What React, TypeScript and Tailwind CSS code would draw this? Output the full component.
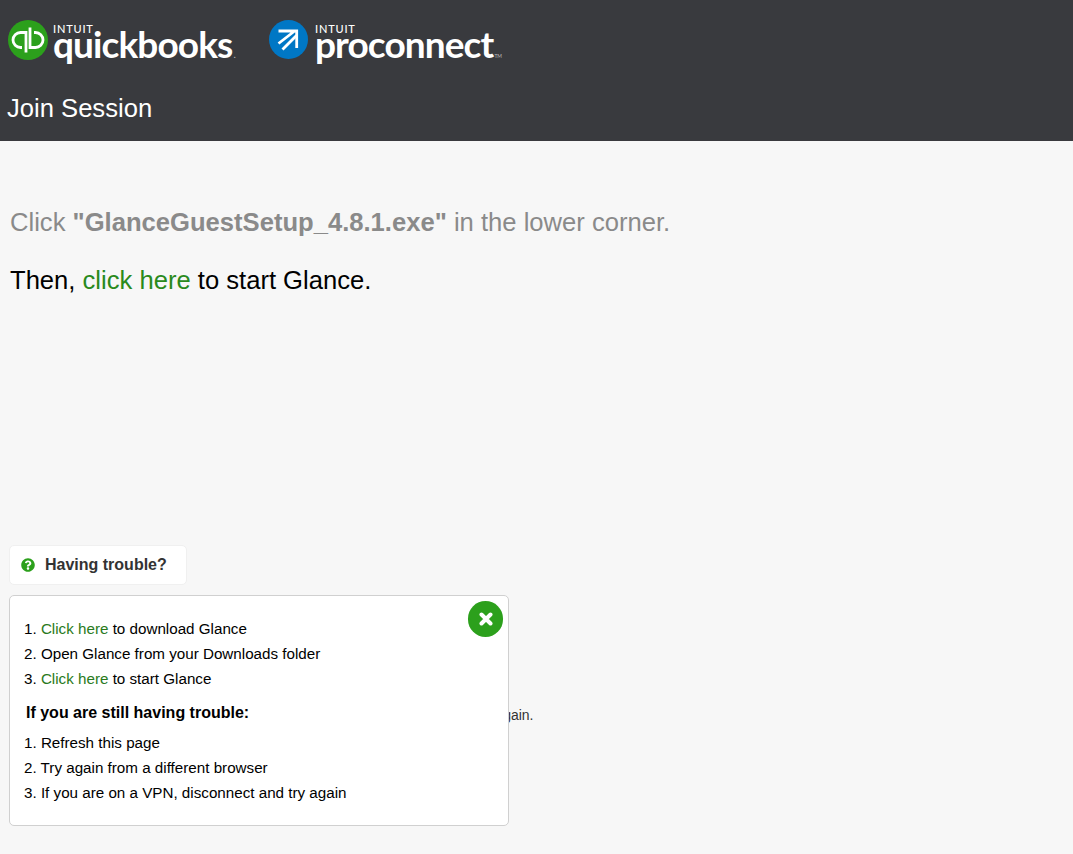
import React from 'react'
import { FaQuestionCircle } from 'react-icons/fa'

const arial = { fontFamily: '"Liberation Sans", Arial, sans-serif' }

const QbMark = () => (
    <svg width="40" height="40" viewBox="0 0 40 40">
        <circle cx="20" cy="20" r="20" fill="#2ca01c" />
        <path d="M14 27.5h-1.5a7.5 7.5 0 0 1 0-15h5.5v20" fill="none" stroke="#fff" strokeWidth="2.8" />
        <path d="M26 12.5h1.5a7.5 7.5 0 0 1 0 15h-5.5v-20" fill="none" stroke="#fff" strokeWidth="2.8" />
    </svg>
)

const ProconnectMark = () => (
    <svg width="39" height="39" viewBox="0 0 39 39">
        <circle cx="19.5" cy="19.5" r="19.5" fill="#0077c5" />
        <path d="M9.5 11h18.2v17M9.5 23.5L25 11.5" fill="none" stroke="#fff" strokeWidth="2.8" />
        <path d="M13.5 29.5L27.5 15.5" fill="none" stroke="#fff" strokeWidth="2.8" />
    </svg>
)

const Wordmark = ({ name, tm, tmClass }: { name: string; tm: string; tmClass: string }) => (
    <div className="flex flex-col text-white font-['Lato',sans-serif]">
        <span className="h-[10px] text-[11px] font-medium leading-[10px] tracking-[0.8px]">INTUIT</span>
        <span className="-mt-[6px] text-[37px] font-bold leading-[32px] tracking-[-0.9px]">
            {name}
            <span className={`ml-[1px] font-normal tracking-normal text-[#bbbbbb] ${tmClass}`}>{tm}</span>
        </span>
    </div>
)

const App = () => {
    return (
        <div className="min-h-[854px] bg-[#f7f7f7] text-black" style={arial}>
            <header className="h-[141px] bg-[#393a3e] pt-5 pl-2">
                <div className="flex items-start">
                    <QbMark />
                    <div className="ml-[5px] mt-[4px] w-[216px]">
                        <Wordmark name="quickbooks" tm="." tmClass="text-[10px]" />
                    </div>
                    <ProconnectMark />
                    <div className="ml-[7px] mt-[4px]">
                        <Wordmark name="proconnect" tm="TM" tmClass="text-[5px]" />
                    </div>
                </div>
                <h1 className="mt-[19px] -ml-px text-[25.6px] leading-[34px] text-white">Join Session</h1>
            </header>

            <main className="relative pl-[10px]">
                <p className="pt-[66px] text-[25.6px] leading-[30px] text-[#8a8a8a]">
                    Click <b>"GlanceGuestSetup_4.8.1.exe"</b> in the lower corner.
                </p>
                <p className="mt-[28px] text-[25.6px] leading-[30px]">
                    Then, <a className="text-[#2a8a1c]">click here</a> to start Glance.
                </p>

                <div className="absolute left-[9px] top-[404px] flex h-10 w-[178px] items-center rounded-[5px] border border-[#f0f0f0] bg-white pl-[11px]">
                    <FaQuestionCircle className="text-[#2ca01c]" size={14} />
                    <span className="ml-[10px] text-[16px] font-bold text-[#333333]">Having trouble?</span>
                </div>

                <p className="mt-[411px] text-[14px] leading-[18px] text-[#333333]">
                    If the download does not start automatically, refresh the page and then try this again.
                </p>

                <div className="absolute left-[9px] top-[454px] h-[231px] w-[500px] rounded-[5px] border border-[#d0d0d0] bg-white pl-[14px] pt-[20px] text-[15.2px] leading-[25px]">
                    <button className="absolute right-[5px] top-[5px] flex h-[36px] w-[35px] items-center justify-center rounded-full bg-[#2ca01c]">
                        <svg width="14" height="14" viewBox="0 0 14 14">
                            <path d="M2.5 2.5l9 9M11.5 2.5l-9 9" fill="none" stroke="#fff" strokeWidth="4" strokeLinecap="round" />
                        </svg>
                    </button>
                    <ol>
                        <li>1. <a className="text-[#2a7a1c]">Click here</a> to download Glance</li>
                        <li>2. Open Glance from your Downloads folder</li>
                        <li>3. <a className="text-[#2a7a1c]">Click here</a> to start Glance</li>
                    </ol>
                    <p className="ml-[2px] mt-[9px] text-[16px] font-bold leading-[25px]">If you are still having trouble:</p>
                    <ol className="mt-[5px]">
                        <li>1. Refresh this page</li>
                        <li>2. Try again from a different browser</li>
                        <li>3. If you are on a VPN, disconnect and try again</li>
                    </ol>
                </div>
            </main>
        </div>
    )
}

export default App
